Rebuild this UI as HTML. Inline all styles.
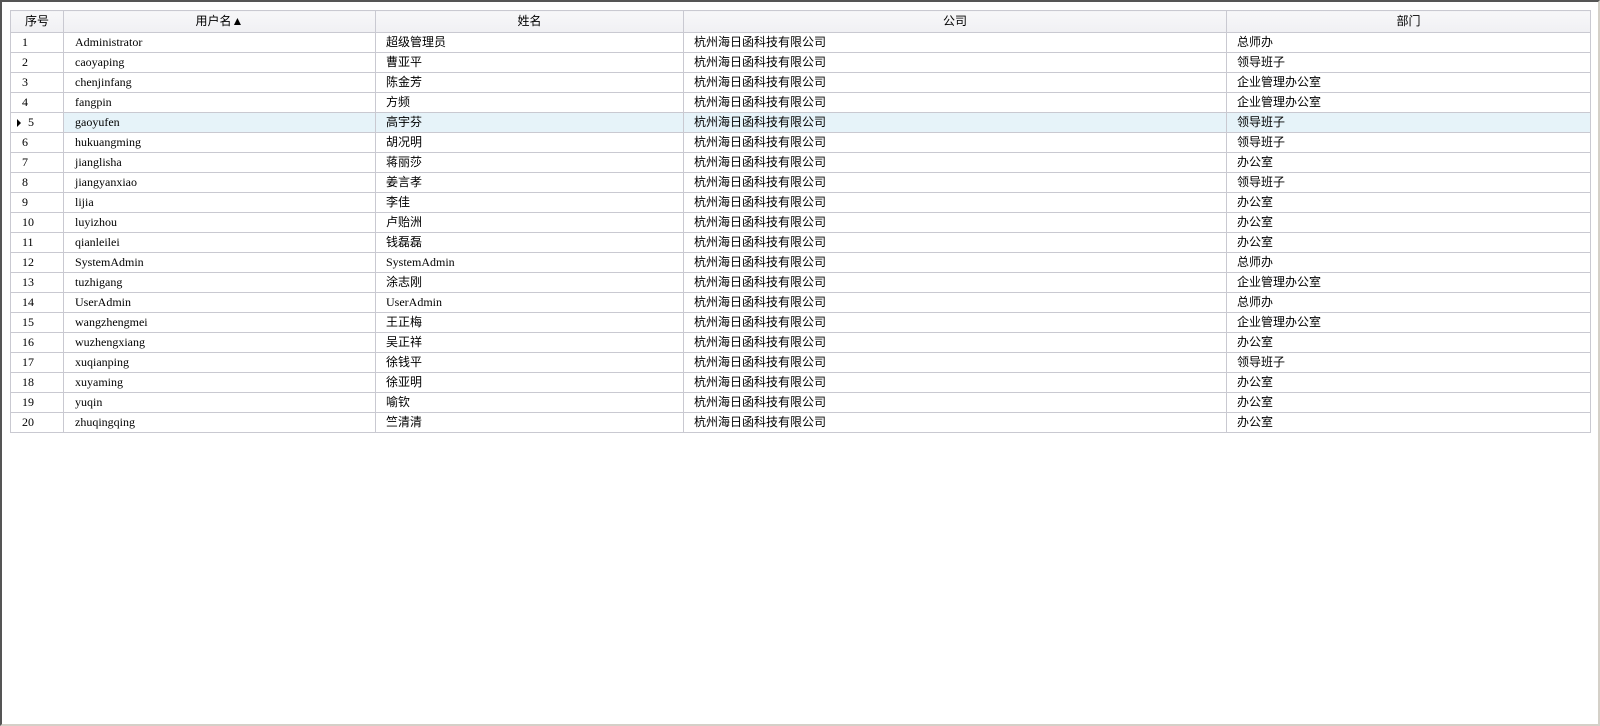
<!DOCTYPE html>
<html><head><meta charset="utf-8"><style>
html,body{margin:0;padding:0;width:1600px;height:726px;overflow:hidden;background:#fff}
.frame{position:absolute;left:0;top:0;width:1596px;height:722px;border-top:2px solid #555;border-left:2px solid #555;border-right:2px solid #d4d0c8;border-bottom:2px solid #d4d0c8}
table{position:absolute;left:10px;top:10px;border-collapse:collapse;table-layout:fixed;font-size:12px}
td,th{border:1px solid #c9c9d1;height:19px;padding:0;white-space:nowrap;overflow:hidden;line-height:19px}
th{height:21px;font-weight:normal;background:linear-gradient(#f7f7f9,#f0f0f3);font-family:"Liberation Sans","Noto Sans CJK SC",sans-serif;color:#000}
td{font-family:"Liberation Sans","Noto Sans CJK SC",sans-serif;padding-left:10px}
td.n{font-family:"Liberation Serif","Noto Sans CJK SC",serif;padding-left:11px;position:relative}
td.u{font-family:"Liberation Serif","Noto Sans CJK SC",serif;padding-left:11px}
tr.sel td:not(.n){background:#e6f3f9}
.tri{position:absolute;left:6px;top:6px;width:0;height:0;border-top:4px solid transparent;border-bottom:4px solid transparent;border-left:4px solid #000}
</style></head><body>
<div class="frame"></div>
<table>
<colgroup><col style="width:53px"><col style="width:312px"><col style="width:308px"><col style="width:543px"><col style="width:364px"></colgroup>
<tr><th>序号</th><th>用户名▲</th><th>姓名</th><th>公司</th><th>部门</th></tr>
<tr><td class="n">1</td><td class="u">Administrator</td><td>超级管理员</td><td>杭州海日函科技有限公司</td><td>总师办</td></tr>
<tr><td class="n">2</td><td class="u">caoyaping</td><td>曹亚平</td><td>杭州海日函科技有限公司</td><td>领导班子</td></tr>
<tr><td class="n">3</td><td class="u">chenjinfang</td><td>陈金芳</td><td>杭州海日函科技有限公司</td><td>企业管理办公室</td></tr>
<tr><td class="n">4</td><td class="u">fangpin</td><td>方频</td><td>杭州海日函科技有限公司</td><td>企业管理办公室</td></tr>
<tr class="sel"><td class="n"><span class="tri"></span>&nbsp;&nbsp;5</td><td class="u">gaoyufen</td><td>高宇芬</td><td>杭州海日函科技有限公司</td><td>领导班子</td></tr>
<tr><td class="n">6</td><td class="u">hukuangming</td><td>胡况明</td><td>杭州海日函科技有限公司</td><td>领导班子</td></tr>
<tr><td class="n">7</td><td class="u">jianglisha</td><td>蒋丽莎</td><td>杭州海日函科技有限公司</td><td>办公室</td></tr>
<tr><td class="n">8</td><td class="u">jiangyanxiao</td><td>姜言孝</td><td>杭州海日函科技有限公司</td><td>领导班子</td></tr>
<tr><td class="n">9</td><td class="u">lijia</td><td>李佳</td><td>杭州海日函科技有限公司</td><td>办公室</td></tr>
<tr><td class="n">10</td><td class="u">luyizhou</td><td>卢贻洲</td><td>杭州海日函科技有限公司</td><td>办公室</td></tr>
<tr><td class="n">11</td><td class="u">qianleilei</td><td>钱磊磊</td><td>杭州海日函科技有限公司</td><td>办公室</td></tr>
<tr><td class="n">12</td><td class="u">SystemAdmin</td><td class="u" style="padding-left:10px">SystemAdmin</td><td>杭州海日函科技有限公司</td><td>总师办</td></tr>
<tr><td class="n">13</td><td class="u">tuzhigang</td><td>涂志刚</td><td>杭州海日函科技有限公司</td><td>企业管理办公室</td></tr>
<tr><td class="n">14</td><td class="u">UserAdmin</td><td class="u" style="padding-left:10px">UserAdmin</td><td>杭州海日函科技有限公司</td><td>总师办</td></tr>
<tr><td class="n">15</td><td class="u">wangzhengmei</td><td>王正梅</td><td>杭州海日函科技有限公司</td><td>企业管理办公室</td></tr>
<tr><td class="n">16</td><td class="u">wuzhengxiang</td><td>吴正祥</td><td>杭州海日函科技有限公司</td><td>办公室</td></tr>
<tr><td class="n">17</td><td class="u">xuqianping</td><td>徐钱平</td><td>杭州海日函科技有限公司</td><td>领导班子</td></tr>
<tr><td class="n">18</td><td class="u">xuyaming</td><td>徐亚明</td><td>杭州海日函科技有限公司</td><td>办公室</td></tr>
<tr><td class="n">19</td><td class="u">yuqin</td><td>喻钦</td><td>杭州海日函科技有限公司</td><td>办公室</td></tr>
<tr><td class="n">20</td><td class="u">zhuqingqing</td><td>竺清清</td><td>杭州海日函科技有限公司</td><td>办公室</td></tr>
</table>
</body></html>
